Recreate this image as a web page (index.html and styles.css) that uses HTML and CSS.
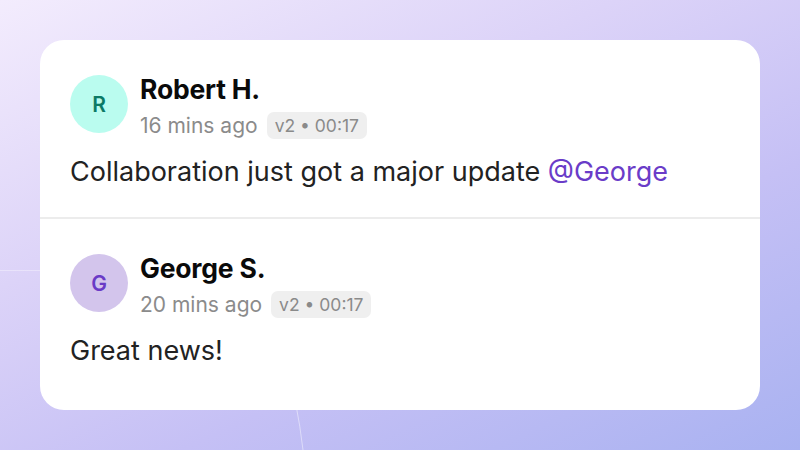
FILE: index.html
```html
<!DOCTYPE html>
<html lang="en">
<head>
<meta charset="utf-8">
<link rel="stylesheet" href="styles.css">
</head>
<body>
<div class="stage">
  <svg class="deco" width="800" height="450" viewBox="0 0 800 450">
    <path d="M0 270.5 H60" stroke="rgba(255,255,255,0.35)" stroke-width="1" fill="none"/>
    <path d="M296 405 Q300 425 303 450" stroke="rgba(255,255,255,0.45)" stroke-width="1" fill="none"/>
  </svg>
  <div class="card">
    <div class="comment">
      <div class="head">
        <div class="avatar avatar-r">R</div>
        <div class="info">
          <div class="name">Robert H.</div>
          <div class="meta"><span class="time">16 mins ago</span><span class="badge">v2 • 00:17</span></div>
        </div>
      </div>
      <p class="msg">Collaboration just got a major update <span class="mention">@George</span></p>
    </div>
    <div class="comment">
      <div class="head">
        <div class="avatar avatar-g">G</div>
        <div class="info">
          <div class="name">George S.</div>
          <div class="meta"><span class="time">20 mins ago</span><span class="badge">v2 • 00:17</span></div>
        </div>
      </div>
      <p class="msg">Great news!</p>
    </div>
  </div>
</div>
</body>
</html>
```
FILE: styles.css
```css
html, body {
  margin: 0;
  padding: 0;
}
body {
  font-family: Inter, "Noto Sans", sans-serif;
}
.stage {
  position: relative;
  width: 800px;
  height: 450px;
  box-sizing: border-box;
  padding: 40px;
  background: linear-gradient(155deg, #f3ecfd 0%, #dcd3f8 35%, #c5c0f5 65%, #a9b2f1 100%);
  overflow: hidden;
}
.deco {
  position: absolute;
  left: 0;
  top: 0;
}
.card {
  position: relative;
  background: #fff;
  border-radius: 24px;
  height: 370px;
  box-sizing: border-box;
}
.comment {
  padding: 34px 30px 0;
  box-sizing: border-box;
}
.comment:first-child {
  height: 179px;
  border-bottom: 2px solid #ececec;
}
.head {
  display: flex;
  align-items: flex-start;
  gap: 12px;
}
.avatar {
  width: 58px;
  height: 58px;
  margin-top: 1px;
  border-radius: 50%;
  display: flex;
  align-items: center;
  justify-content: center;
  font-size: 21px;
  font-weight: 600;
  flex: none;
}
.avatar-r {
  background: #bafcef;
  color: #0c7a66;
}
.avatar-g {
  background: #d3c5ec;
  color: #6a3bc6;
}
.info {
  display: flex;
  flex-direction: column;
  gap: 8px;
}
.name {
  font-size: 26.5px;
  font-weight: 700;
  line-height: 30px;
  color: #0a0a0a;
  letter-spacing: -0.2px;
}
.meta {
  display: flex;
  align-items: center;
  gap: 9px;
}
.time {
  font-size: 21px;
  color: #8b8b8b;
}
.badge {
  background: #efefef;
  border-radius: 7px;
  padding: 0 8px;
  height: 27px;
  line-height: 27px;
  font-size: 17.5px;
  color: #8a8a8a;
}
.msg {
  margin: 17px 0 0;
  font-size: 27px;
  line-height: 32px;
  color: #222;
}
.mention {
  color: #6a3cc8;
}
```
